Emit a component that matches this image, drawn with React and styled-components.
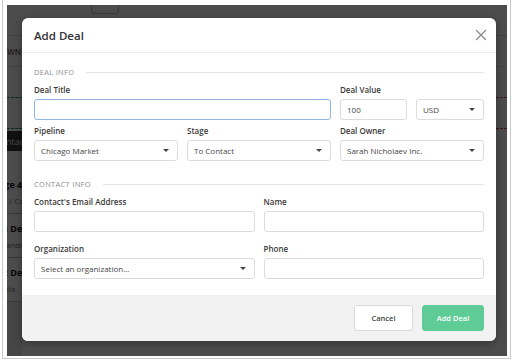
import styled, { createGlobalStyle } from 'styled-components'

const Global = createGlobalStyle`
  html, body {
    margin: 0;
    background: #fff;
    font-family: "Open Sans", "Liberation Sans", sans-serif;
  }
`

const Window = styled.div`
  margin-left: 2px;
  width: 509px;
  height: 359px;
  box-sizing: border-box;
  border: 1px solid #c9c9c9;
  border-top: 0;
  padding: 5px 3px 2px 4px;
`
const Screen = styled.div`
  position: relative;
  width: 500px;
  height: 351px;
  overflow: hidden;
  background: #fff;
`

/* dimmed app behind the dialog */
const Backdrop = styled.div`
  display: flex;
  flex-direction: column;
  height: 100%;
  color: #333;
`
const TopBar = styled.div`
  height: 30px;
  border-bottom: 1px solid #ddd;
  display: flex;
  padding-left: 84px;
`
const SearchBox = styled.div`
  width: 26px;
  height: 8px;
  border: 1px solid #bbb;
  border-top: 0;
  border-radius: 0 0 4px 4px;
`
const FilterBar = styled.div`
  height: 30px;
  border-bottom: 1px solid #ddd;
  display: flex;
  align-items: center;
  font-size: 8px;
  font-weight: 600;
  color: #666;
  overflow: hidden;
`
const Lanes = styled.div`
  display: flex;
  justify-content: space-between;
`
const LaneCol = styled.div`
  width: 15px;
`
const Lane = styled.div`
  height: 30px;
  border-bottom: 1px dashed ${p => p.$c};
`
const List = styled.div`
  width: 15px;
  flex: 1;
  display: flex;
  flex-direction: column;
  overflow: hidden;
  white-space: nowrap;
`
const ListHead = styled.div`
  margin-top: 2px;
  height: 20px;
  flex: none;
  background: #3a3a3a;
  color: #eee;
  display: flex;
  align-items: center;
  font-size: 9px;
  text-indent: -12px;
`
const ListRow = styled.div`
  height: ${p => p.$h || 43}px;
  flex: none;
  border-bottom: 1px solid ${p => (p.$plain ? 'transparent' : '#bbb')};
  display: flex;
  flex-direction: column;
  justify-content: center;
  gap: 4px;
  text-indent: -17px;
  b { font-size: 9px; color: #111; }
  span { font-size: 8px; color: #777; }
`
const Rest = styled.div`
  flex: 1;
  background: #ececec;
`

const Overlay = styled.div`
  position: absolute;
  inset: 0;
  background: rgba(0, 0, 0, 0.7);
`

/* dialog */
const Modal = styled.div`
  position: absolute;
  left: 15px;
  top: 13px;
  width: 474px;
  height: 323px;
  background: #fff;
  border-radius: 6px;
  overflow: hidden;
  display: flex;
  flex-direction: column;
  box-shadow: 0 2px 8px rgba(0, 0, 0, 0.35);
`
const Header = styled.div`
  height: 34px;
  flex: none;
  display: flex;
  align-items: center;
  justify-content: space-between;
  padding: 0 9px 0 12px;
  border-bottom: 1px solid #ececec;
`
const Title = styled.h2`
  margin: 0;
  font-size: 11.5px;
  font-weight: 600;
  color: #333;
`
const Close = styled.button`
  border: 0;
  background: none;
  padding: 0;
  width: 12px;
  height: 12px;
  display: flex;
  cursor: pointer;
`
const Body = styled.div`
  flex: 1;
  padding: 13px 12px 0;
`
const Section = styled.div`
  display: flex;
  align-items: center;
  gap: 12px;
  height: 12px;
  margin: ${p => p.$top || 0}px 0 6px;
  font-size: 7.5px;
  letter-spacing: 0.3px;
  color: #8e8e8e;
  text-transform: uppercase;
  &::after {
    content: '';
    flex: 1;
    height: 1px;
    background: #e4e4e4;
  }
`
const Grid = styled.div`
  display: grid;
  grid-template-columns: ${p => p.$cols};
  column-gap: 9px;
  margin-bottom: ${p => p.$gap || 0}px;
`
const Field = styled.div`
  display: flex;
  flex-direction: column;
  grid-column: span ${p => p.$span || 1};
`
const Label = styled.label`
  height: 12px;
  line-height: 12px;
  margin-bottom: 3px;
  font-size: 8px;
  font-weight: 600;
  color: #3a3a3a;
  white-space: nowrap;
`
const Input = styled.div`
  height: 21px;
  box-sizing: border-box;
  border: 1px solid ${p => (p.$focus ? '#8fb6e3' : '#dcdcdc')};
  border-radius: 3px;
  background: #fff;
  display: flex;
  align-items: center;
  justify-content: space-between;
  padding: 0 8px 0 6px;
  font-size: 8px;
  color: #454545;
  white-space: nowrap;
`
const Caret = styled.span`
  width: 0;
  height: 0;
  border-left: 3px solid transparent;
  border-right: 3px solid transparent;
  border-top: 3px solid #444;
`
const Footer = styled.div`
  height: 46px;
  flex: none;
  background: #f2f2f2;
  display: flex;
  align-items: center;
  justify-content: flex-end;
  gap: 9px;
  padding: 0 12px;
`
const Button = styled.button`
  height: 26px;
  width: ${p => p.$w}px;
  border-radius: 3px;
  border: 1px solid ${p => (p.$primary ? '#5fcb97' : '#dadada')};
  background: ${p => (p.$primary ? '#5fcb97' : '#fff')};
  color: ${p => (p.$primary ? '#fff' : '#444')};
  font-family: inherit;
  font-size: 7.5px;
  font-weight: 600;
  padding: 0;
`

const Select = ({ children }) => (
  <Input>
    <span>{children}</span>
    <Caret />
  </Input>
)

export default function App() {
  return (
    <>
      <Global />
      <Window>
        <Screen>
          <Backdrop>
            <TopBar><SearchBox /></TopBar>
            <FilterBar>
              <List as="span" style={{ flex: 'none', textIndent: -6 }}>OWNER</List>
            </FilterBar>
            <Lanes>
              <LaneCol>
                <Lane $c="#2e9a5a" />
                <Lane $c="#2e9a5a" />
              </LaneCol>
              <LaneCol>
                <Lane $c="#d2403c" />
                <Lane $c="#d2403c" />
              </LaneCol>
            </Lanes>
            <List>
              <ListHead>Contacts</ListHead>
              <ListRow $h={18} $plain><span>ls</span></ListRow>
              <ListRow><b>Stage 4 Deal</b><span>Click / Call</span></ListRow>
              <ListRow><b>Fo 3 Deal</b><span>Alexandra</span></ListRow>
              <ListRow><b>Fo 2 Deal</b><span>Angela</span></ListRow>
              <Rest />
            </List>
          </Backdrop>
          <Overlay />
          <Modal>
            <Header>
              <Title>Add Deal</Title>
              <Close aria-label="Close">
                <svg width="12" height="12" viewBox="0 0 12 12">
                  <path d="M1.5 1.5 L10.5 10.5 M10.5 1.5 L1.5 10.5" stroke="#8a8a8a" strokeWidth="1.3" strokeLinecap="round" />
                </svg>
              </Close>
            </Header>
            <Body>
              <Section>Deal Info</Section>
              <Grid $cols="1fr 1fr 67px 68px" $gap={5}>
                <Field $span={2}>
                  <Label>Deal Title</Label>
                  <Input $focus />
                </Field>
                <Field>
                  <Label>Deal Value</Label>
                  <Input>100</Input>
                </Field>
                <Field>
                  <Label>&nbsp;</Label>
                  <Select>USD</Select>
                </Field>
              </Grid>
              <Grid $cols="1fr 1fr 1fr">
                <Field>
                  <Label>Pipeline</Label>
                  <Select>Chicago Market</Select>
                </Field>
                <Field>
                  <Label>Stage</Label>
                  <Select>To Contact</Select>
                </Field>
                <Field>
                  <Label>Deal Owner</Label>
                  <Select>Sarah Nicholaev Inc.</Select>
                </Field>
              </Grid>
              <Section $top={17}>Contact Info</Section>
              <Grid $cols="1fr 1fr" $gap={11}>
                <Field>
                  <Label>Contact's Email Address</Label>
                  <Input />
                </Field>
                <Field>
                  <Label>Name</Label>
                  <Input />
                </Field>
              </Grid>
              <Grid $cols="1fr 1fr">
                <Field>
                  <Label>Organization</Label>
                  <Select>Select an organization...</Select>
                </Field>
                <Field>
                  <Label>Phone</Label>
                  <Input />
                </Field>
              </Grid>
            </Body>
            <Footer>
              <Button $w={59}>Cancel</Button>
              <Button $w={62} $primary>Add Deal</Button>
            </Footer>
          </Modal>
        </Screen>
      </Window>
    </>
  )
}
